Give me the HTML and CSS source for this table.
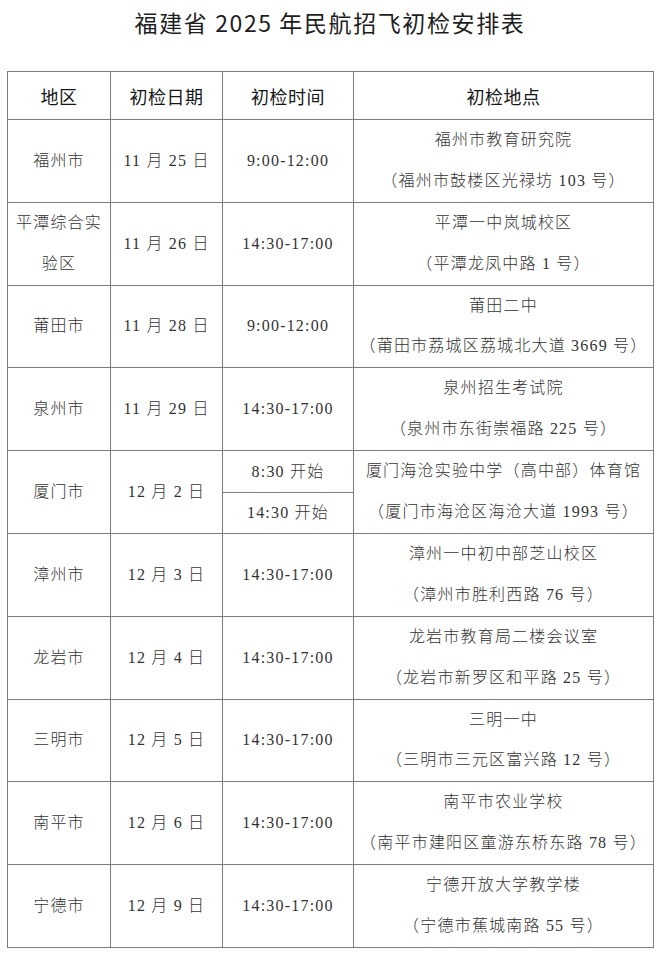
FILE: index.html
```html
<!DOCTYPE html>
<html lang="zh-CN">
<head>
<meta charset="utf-8">
<title>福建省 2025 年民航招飞初检安排表</title>
<link rel="stylesheet" href="styles.css">
</head>
<body>
<h1 class="title">福建省 2025 年民航招飞初检安排表</h1>
<table class="schedule">
  <colgroup>
    <col class="c-region"><col class="c-date"><col class="c-time"><col class="c-place">
  </colgroup>
  <thead>
    <tr class="head">
      <th>地区</th><th>初检日期</th><th>初检时间</th><th>初检地点</th>
    </tr>
  </thead>
  <tbody>
    <tr class="row">
      <td>福州市</td><td>11 月 25 日</td><td>9:00-12:00</td>
      <td><div class="ln">福州市教育研究院</div><div class="ln">（福州市鼓楼区光禄坊 103 号）</div></td>
    </tr>
    <tr class="row">
      <td><div class="ln">平潭综合实</div><div class="ln">验区</div></td><td>11 月 26 日</td><td>14:30-17:00</td>
      <td><div class="ln">平潭一中岚城校区</div><div class="ln">（平潭龙凤中路 1 号）</div></td>
    </tr>
    <tr class="row">
      <td>莆田市</td><td>11 月 28 日</td><td>9:00-12:00</td>
      <td><div class="ln">莆田二中</div><div class="ln">（莆田市荔城区荔城北大道 3669 号）</div></td>
    </tr>
    <tr class="row">
      <td>泉州市</td><td>11 月 29 日</td><td>14:30-17:00</td>
      <td><div class="ln">泉州招生考试院</div><div class="ln">（泉州市东街崇福路 225 号）</div></td>
    </tr>
    <tr class="half first">
      <td rowspan="2">厦门市</td><td rowspan="2">12 月 2 日</td><td>8:30 开始</td>
      <td rowspan="2"><div class="ln">厦门海沧实验中学（高中部）体育馆</div><div class="ln">（厦门市海沧区海沧大道 1993 号）</div></td>
    </tr>
    <tr class="half second">
      <td>14:30 开始</td>
    </tr>
    <tr class="row">
      <td>漳州市</td><td>12 月 3 日</td><td>14:30-17:00</td>
      <td><div class="ln">漳州一中初中部芝山校区</div><div class="ln">（漳州市胜利西路 76 号）</div></td>
    </tr>
    <tr class="row">
      <td>龙岩市</td><td>12 月 4 日</td><td>14:30-17:00</td>
      <td><div class="ln">龙岩市教育局二楼会议室</div><div class="ln">（龙岩市新罗区和平路 25 号）</div></td>
    </tr>
    <tr class="row">
      <td>三明市</td><td>12 月 5 日</td><td>14:30-17:00</td>
      <td><div class="ln">三明一中</div><div class="ln">（三明市三元区富兴路 12 号）</div></td>
    </tr>
    <tr class="row">
      <td>南平市</td><td>12 月 6 日</td><td>14:30-17:00</td>
      <td><div class="ln">南平市农业学校</div><div class="ln">（南平市建阳区童游东桥东路 78 号）</div></td>
    </tr>
    <tr class="row">
      <td>宁德市</td><td>12 月 9 日</td><td>14:30-17:00</td>
      <td><div class="ln">宁德开放大学教学楼</div><div class="ln">（宁德市蕉城南路 55 号）</div></td>
    </tr>
  </tbody>
</table>
</body>
</html>
```

FILE: styles.css
```css
html, body {
  margin: 0;
  padding: 0;
  background: #ffffff;
}

body {
  width: 660px;
  font-family: "Liberation Serif", "Noto Sans CJK SC", serif;
  color: #333333;
}

.title {
  margin: 6px 0 0;
  height: 32px;
  line-height: 32px;
  font-family: "Noto Sans CJK SC", sans-serif;
  font-size: 23px;
  font-weight: 400;
  color: #1e1e1e;
  text-align: center;
  letter-spacing: 1.6px;
}

.schedule {
  margin: 33px 0 0 7px;
  width: 646px;
  border-collapse: collapse;
  table-layout: fixed;
}

.c-region { width: 103px; }
.c-date { width: 112px; }
.c-time { width: 131px; }
.c-place { width: 300px; }

.schedule th,
.schedule td {
  border: 1px solid #7d7d7d;
  padding: 0;
  text-align: center;
  vertical-align: middle;
}

.schedule th {
  font-family: "Noto Sans CJK SC", sans-serif;
  font-size: 18px;
  font-weight: 400;
  color: #161616;
  letter-spacing: 0.5px;
}

.schedule td {
  font-size: 16px;
  letter-spacing: 1.2px;
  line-height: 40px;
  font-weight: 300;
}

.head { height: 48px; }
.row { height: 82.75px; }
.half.first { height: 42px; }
.half.second { height: 41px; }

.ln {
  line-height: 40.8px;
  white-space: nowrap;
}
```
